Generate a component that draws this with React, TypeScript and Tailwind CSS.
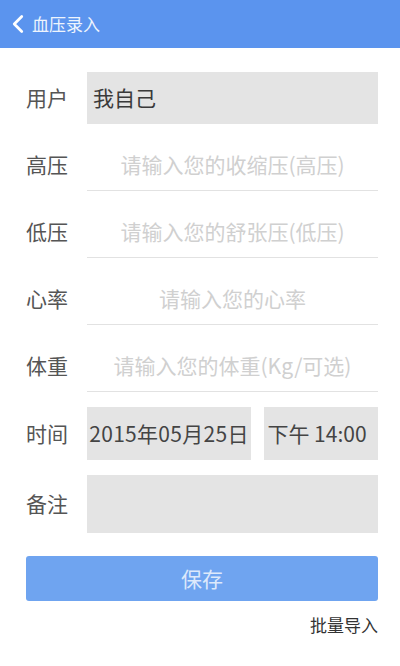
import { ChevronLeft } from "lucide-react";

const font = {
  fontFamily: '"Noto Sans CJK SC", "Liberation Sans", sans-serif',
};

const lineRows = [
  { label: "高压", placeholder: "请输入您的收缩压(高压)" },
  { label: "低压", placeholder: "请输入您的舒张压(低压)" },
  { label: "心率", placeholder: "请输入您的心率" },
  { label: "体重", placeholder: "请输入您的体重(Kg/可选)" },
];

function Label({ text }: { text: string }) {
  return (
    <span className="w-[61px] shrink-0 text-[21px] text-[#555555]">{text}</span>
  );
}

export default function App() {
  return (
    <div className="w-[400px] h-[666px] bg-white flex flex-col" style={font}>
      {/* Header */}
      <div className="h-[48px] bg-[#5b94ee] flex items-center pl-[3px]">
        <ChevronLeft size={30} color="white" strokeWidth={2.2} />
        <span className="text-[17px] text-[#eef4fd] -ml-[1px]">血压录入</span>
      </div>

      {/* Form */}
      <div className="flex flex-col gap-[15px] pt-[24px] pl-[26px] pr-[22px]">
        <div className="h-[52px] flex items-center">
          <Label text="用户" />
          <div className="flex-1 h-full bg-[#e4e4e4] flex items-center pl-[6px] text-[21px] text-[#3a3a3a]">
            我自己
          </div>
        </div>

        {lineRows.map((row) => (
          <div key={row.label} className="h-[52px] flex items-center">
            <Label text={row.label} />
            <div className="flex-1 h-full flex items-center justify-center border-b border-[#e2e2e2] text-[21px] text-[#d0d0d0]">
              {row.placeholder}
            </div>
          </div>
        ))}

        <div className="h-[53px] flex items-center">
          <Label text="时间" />
          <div className="flex-1 h-full flex gap-[13px]">
            <div className="w-[164px] h-full bg-[#e4e4e4] flex items-center justify-center text-[21px] text-[#444444] tracking-[0.3px] whitespace-nowrap">
              2015年05月25日
            </div>
            <div className="flex-1 h-full bg-[#e4e4e4] flex items-center justify-center text-[21px] text-[#444444] pr-[8px] whitespace-nowrap">
              下午 14:00
            </div>
          </div>
        </div>

        <div className="h-[58px] flex items-center">
          <Label text="备注" />
          <div className="flex-1 h-full bg-[#e4e4e4]" />
        </div>

        <button className="mt-[8px] h-[45px] rounded-[3px] bg-[#6fa4f0] text-[21px] text-[#dde9fb]">
          保存
        </button>

        <div className="-mt-[4px] flex justify-end text-[17px] text-[#333333]">
          批量导入
        </div>
      </div>
    </div>
  );
}
